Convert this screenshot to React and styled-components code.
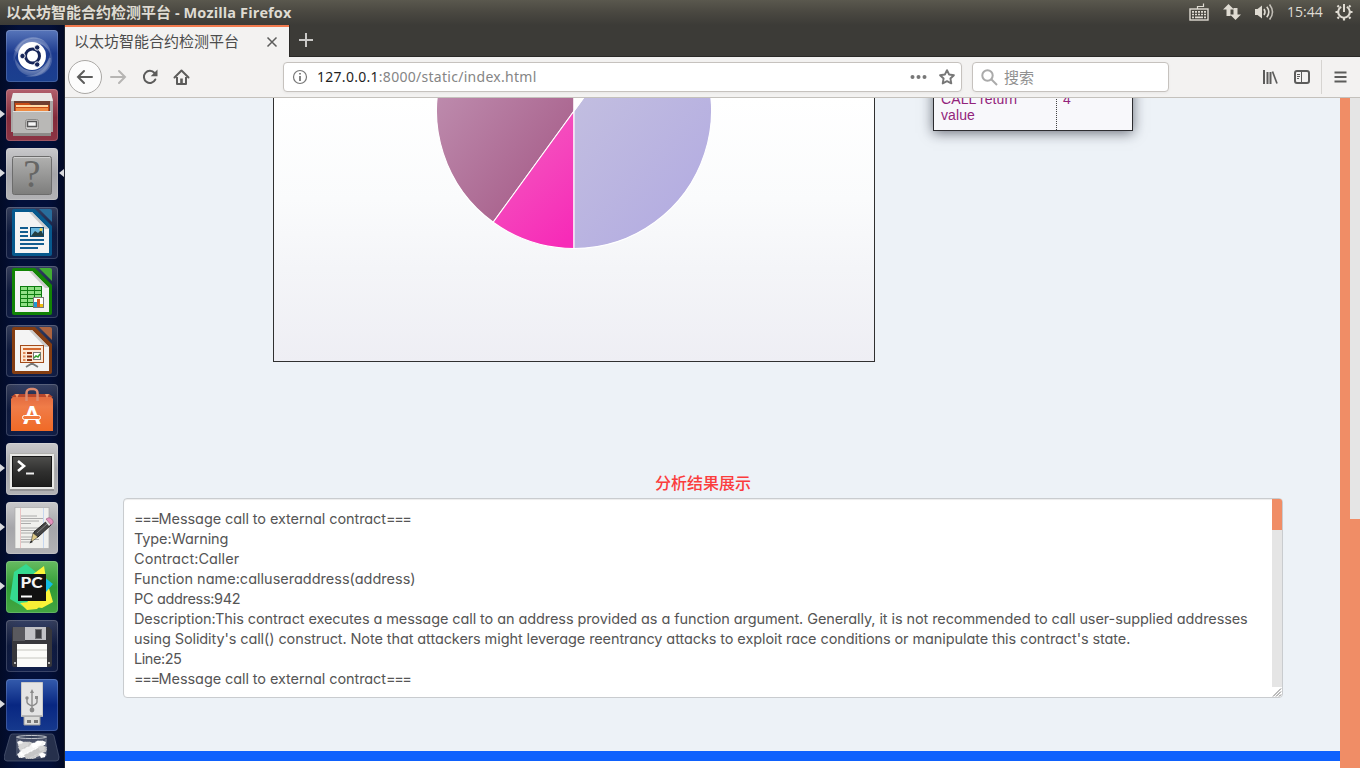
import React from "react";
import styled, { createGlobalStyle } from "styled-components";

const GlobalStyle = createGlobalStyle`
  *, *::before, *::after { box-sizing: border-box; }
  html, body { margin: 0; padding: 0; overflow: hidden; }
  svg { display: block; flex: none; }
`;

const uiFont = `"Open Sans", "Noto Sans", "Noto Sans CJK SC", sans-serif`;

const Desktop = styled.div`
  width: 1360px;
  height: 768px;
  display: flex;
  flex-direction: column;
  overflow: hidden;
  background: #030e30;
  font-family: ${uiFont};
`;

const SystemBar = styled.header`
  height: 25px;
  flex: none;
  display: flex;
  align-items: center;
  justify-content: space-between;
  padding: 0 7px 0 6px;
  background: linear-gradient(#5a584e 0, #4a4841 12px, #3c3b37 25px);
  color: #dfdbd2;
`;

const WindowTitle = styled.div`
  font: 700 15px/24px ${uiFont};
  white-space: pre;
`;

const TitleLatin = styled.span`
  font-size: 14.5px;
  letter-spacing: 0.12px;
`;

const Indicators = styled.div`
  display: flex;
  align-items: center;
  height: 25px;
  padding-bottom: 1px;
`;

const Indicator = styled.div`
  margin-right: ${(p) => p.$gap}px;
`;

const Clock = styled.div`
  font: 400 14px/24px ${uiFont};
  width: 36px;
  margin-right: 12px;
  white-space: nowrap;
`;

const Body = styled.div`
  flex: 1;
  min-height: 0;
  display: flex;
`;

const Launcher = styled.nav`
  width: 65px;
  flex: none;
  padding-top: 5px;
  background: linear-gradient(90deg, #020b27, #03103a 30%, #03103a 75%, #020a26);
  border-right: 1px solid #20242f;
  overflow: hidden;
`;

const LauncherItem = styled.div`
  height: 59px;
  display: flex;
  align-items: flex-start;
`;

const Pip = styled.div`
  width: 6px;
  height: 50px;
  display: flex;
  align-items: center;
  justify-content: ${(p) => (p.$right ? "flex-end" : "flex-start")};
`;

const Tile = styled.div`
  width: 52px;
  height: 52px;
  border-radius: 4px;
  background: ${(p) => p.$bg};
  box-shadow: inset 0 0 0 1px rgba(255, 255, 255, 0.17);
`;

const TrashSlot = styled.div`
  margin-top: -5px;
  padding-left: 4px;
`;

const Browser = styled.main`
  width: 1295px;
  display: flex;
  flex-direction: column;
  background: #f3f2f1;
`;

const TabStrip = styled.div`
  height: 32px;
  flex: none;
  display: flex;
  background: #3c3b37;
  border-bottom: 1px solid #2a2927;
`;

const Tab = styled.div`
  width: 224px;
  height: 32px;
  display: flex;
  align-items: center;
  justify-content: space-between;
  padding: 0 11px 0 9px;
  background: #f3f2f1;
  border-top: 2px solid #f27a4e;
  color: #4c4c4c;
  font-size: 15px;
  line-height: 26px;
`;

const TabLabel = styled.span`
  padding-bottom: 3px;
`;

const NewTab = styled.div`
  padding: 8px 0 0 9px;
  border-left: 1px solid #2a2927;
`;

const Toolbar = styled.div`
  height: 41px;
  flex: none;
  display: flex;
  align-items: center;
  padding-left: 3px;
  background: #f3f2f1;
  border-bottom: 1px solid #c4c1bc;
`;

const BackButton = styled.div`
  width: 34px;
  height: 34px;
  border-radius: 50%;
  border: 1px solid #aaa8a5;
  background: #fcfcfc;
  display: flex;
  align-items: center;
  justify-content: center;
  margin-right: 7px;
`;

const ToolIcon = styled.div`
  margin-right: ${(p) => p.$gap}px;
`;

const Field = styled.div`
  width: ${(p) => p.$width}px;
  height: 30px;
  display: flex;
  align-items: center;
  border: 1px solid #c6c2be;
  border-radius: 4px;
  background: #fff;
  box-shadow: 0 1px 3px rgba(0, 0, 0, 0.05);
  margin-right: ${(p) => p.$after}px;
  padding: 0 6px 0 8px;
  font-size: 15px;
  line-height: 28px;
  color: #909090;
`;

const Address = styled.div`
  flex: 1;
  margin-left: 9px;
  font: 400 14px/28px "Noto Sans", sans-serif;
  letter-spacing: 0.28px;
  color: #858585;
`;

const Host = styled.span`
  color: #1f1f1f;
`;

const Placeholder = styled.span`
  margin-left: 6px;
`;

const Separator = styled.div`
  width: 1px;
  height: 34px;
  background: #d6d4d1;
  margin-right: 12px;
`;

const Viewport = styled.div`
  flex: 1;
  min-height: 0;
  display: flex;
  overflow: hidden;
`;

const Page = styled.div`
  width: 1275px;
  display: flex;
  flex-direction: column;
  background: #edf2f7;
  overflow: hidden;
`;

const Overview = styled.section`
  display: flex;
  align-items: flex-start;
  gap: 58px;
  margin-top: -20px;
  padding-left: 208px;
  height: 394px;
  flex: none;
`;

const ChartPanel = styled.div`
  width: 602px;
  height: 284px;
  border: 1px solid #303030;
  background: linear-gradient(#fff 20px, #fafbfc 120px, #f4f5f8 190px, #eeeef4 283px);
`;

const SummaryTable = styled.div`
  width: 200px;
  height: 53px;
  display: flex;
  border: 1px solid #2c2c30;
  background: #f8f8fb;
  box-shadow: 0 2px 12px rgba(20, 25, 40, 0.6);
  font: 400 14px/16px "Liberation Sans", sans-serif;
  color: #93247b;
`;

const SummaryName = styled.div`
  width: 123px;
  padding: 12px 30px 0 7px;
  border-right: 1px dotted #444;
  letter-spacing: 0.1px;
`;

const SummaryCount = styled.div`
  padding: 12px 0 0 6px;
`;

const ResultTitle = styled.h2`
  margin: 0;
  height: 26px;
  padding-left: 1px;
  font: 500 16px/20px "Noto Sans CJK SC", sans-serif;
  color: #fb3c3c;
  text-align: center;
`;

const ResultBox = styled.div`
  width: 1160px;
  height: 200px;
  flex: none;
  margin-left: 58px;
  display: flex;
  justify-content: space-between;
  border: 1px solid #c9cccf;
  border-radius: 4px;
  background: #fff;
  box-shadow: inset 0 1px 1px rgba(0, 0, 0, 0.075);
`;

const ResultText = styled.div`
  height: 188px;
  padding: 10px 0 0 10px;
  overflow: hidden;
`;

const ResultLine = styled.div`
  height: 20px;
  font: 400 14.5px/20px Inter, sans-serif;
  font-feature-settings: "cv11";
  letter-spacing: ${(p) => p.$track}px;
  color: #555;
  white-space: pre;
`;

const Rule = styled.span`
  letter-spacing: -1.4px;
`;

const ResultScroll = styled.div`
  width: 10px;
  display: flex;
  flex-direction: column;
`;

const ResultTrack = styled.div`
  height: 188px;
  background: #e5e5e5;
`;

const ResultThumb = styled.div`
  height: 31px;
  border-radius: 0 2px 0 0;
  background: #f08d66;
`;

const FooterBand = styled.div`
  height: 17px;
  margin-top: auto;
  border-top: 10px solid #0e61fd;
  background: #fff;
`;

const InnerScrollbar = styled.div`
  width: 10px;
  background: #f08d66;
`;

const OuterScrollbar = styled.div`
  width: 10px;
  background: #f08d66;
`;

const OuterTrack = styled.div`
  height: 421px;
  background: #e5e5e5;
`;

/* ---------- launcher artwork ---------- */

const UbuntuIcon = () => (
  <svg width="52" height="52" viewBox="0 0 52 52">
    <defs>
      <radialGradient id="swirl" cx=".5" cy=".5" r=".6">
        <stop offset="0" stopColor="#fff" stopOpacity=".65" />
        <stop offset="1" stopColor="#fff" stopOpacity=".05" />
      </radialGradient>
    </defs>
    <path d="M7 32C7 15 19 6 31 8c10 1 15 12 14 20-1-9-8-15-16-15-11 0-17 7-22 19Z" fill="url(#swirl)" />
    <path d="M45 20c5 15-5 27-18 26C15 46 9 38 8 26c4 10 10 15 18 15 9 0 17-7 19-21Z" fill="url(#swirl)" />
    <path d="M8 20C14 8 28 2 40 12c-12-6-24-4-29 10ZM45 28c-1 12-12 22-26 18 12 0 21-6 24-18Z" fill="#fff" opacity=".18" />
    <circle cx="26" cy="26" r="14" fill="#fff" />
    <circle cx="26.500" cy="26" r="7" fill="none" stroke="#162558" strokeWidth="3" />
    <g fill="#162558" stroke="#fff" strokeWidth=".9">
      <circle cx="16.500" cy="26" r="2.700" />
      <circle cx="31.200" cy="17.500" r="2.700" />
      <circle cx="31.200" cy="34.500" r="2.700" />
    </g>
  </svg>
);

const FilesIcon = () => (
  <svg width="52" height="52" viewBox="0 0 52 52">
    <path d="M7 4h38l2 8v31H5V12Z" fill="#aaa7a6" />
    <path d="M7 4h38l2 8H5Z" fill="#e9e8e6" />
    <path d="M8 12h36v11H8Z" fill="#6e3d30" />
    <path d="M9 14h14l2 2h18v7H9Z" fill="#c74b16" />
    <path d="M10 16h32v2H10Z" fill="#ffd9a6" />
    <path d="M10 19h32v4H10Z" fill="#ee8b42" />
    <path d="M7 22h38v25H7Z" fill="#b9b8b6" />
    <path d="M7 22h38v1H7Z" fill="#e2e1df" />
    <path d="M7 44h38v3H7Z" fill="#8d8a88" />
    <rect x="19.500" y="30.500" width="13" height="10" rx="2" fill="#d6d5d3" stroke="#8b8987" />
    <rect x="21.500" y="32.500" width="9" height="5" fill="#f5f5f5" stroke="#555" strokeWidth="1.500" />
  </svg>
);

const UnknownIcon = () => (
  <svg width="52" height="52" viewBox="0 0 52 52">
    <defs>
      <linearGradient id="unk" x2="0" y2="1"><stop stopColor="#b1b1b0" /><stop offset="1" stopColor="#7d7d7c" /></linearGradient>
    </defs>
    <rect x="6.500" y="8.500" width="39" height="38" rx="2" fill="url(#unk)" stroke="#6c6c6c" />
    <path d="M8 9.500h36" stroke="#cfcfcf" />
    <text x="26" y="38.500" textAnchor="middle" fontFamily="Liberation Serif, serif" fontSize="39" fill="#666665">?</text>
  </svg>
);

function DocumentIcon({ color, corner, children }) {
  return (
    <svg width="52" height="52" viewBox="0 0 52 52">
      <path d="M8 2h21l17 17v28a2 2 0 0 1-2 2H8a2 2 0 0 1-2-2V4a2 2 0 0 1 2-2Z" fill={color} />
      <path d="M9 5h17l17 17v24H9Z" fill="#f4f4f4" />
      <path d="M26 5 43 22h-4L23 5Z" fill="#cbcbcb" />
      <path d="M33 2h11a2 2 0 0 1 2 2v11Z" fill={corner} />
      {children}
    </svg>
  );
}

const WriterIcon = () => (
  <DocumentIcon color="#07598d" corner="#286d9c">
    <path d="M14 21h8M14 25h8M14 29h8M14 33h24M14 37h24M14 41h18" stroke="#125d90" strokeWidth="2" />
    <rect x="24.500" y="20.500" width="13" height="9" fill="#6bb8df" stroke="#0b4770" />
    <path d="m25 29 4-5 3 2 3-3 3 6Z" fill="#243f43" />
    <circle cx="35" cy="22.500" r="1.500" fill="#efcf4b" />
  </DocumentIcon>
);

const CalcIcon = () => (
  <DocumentIcon color="#128405" corner="#42ac34">
    <rect x="14" y="20" width="22" height="21" fill="#0d7c10" />
    {[21, 25, 29, 33, 37].map((y) =>
      [15, 22, 29].map((x) => <rect key={`${x}-${y}`} x={x} y={y} width="6" height="3" fill="#90df85" />)
    )}
    <rect x="27.500" y="31.500" width="10" height="10" fill="#fff" stroke="#777" />
    <path d="M28 36h3v5h-3Z" fill="#2098d5" /><path d="M31 33h3v8h-3Z" fill="#d65a21" /><path d="M34 38h3v3h-3Z" fill="#edbd10" />
  </DocumentIcon>
);

const ImpressIcon = () => (
  <DocumentIcon color="#843d12" corner="#ac6440">
    <rect x="14.500" y="20.500" width="23" height="17" fill="#fce8d5" stroke="#a34b1b" />
    <path d="M17 24h18" stroke="#d4682e" strokeWidth="2" />
    <path d="M17 27h2.500v2H17zM17 30.500h2.500v2H17zM17 34h2.500v2H17z" fill="#e08a58" />
    <path d="M21 27h5v2h-5zM21 30.500h5v2h-5zM21 34h5v2h-5z" fill="#8c3211" />
    <rect x="27.500" y="27.500" width="7" height="7" fill="#fff" stroke="#777" />
    <path d="m28 33 2-2 2 1 2-3" fill="none" stroke="#32a02e" strokeWidth="1.500" />
    <path d="M26 38v2m-6 2 5-3h2l5 3" fill="none" stroke="#777" strokeWidth="1.800" />
  </DocumentIcon>
);

const SoftwareIcon = () => (
  <svg width="52" height="52" viewBox="0 0 52 52">
    <defs><linearGradient id="bag" x2="0" y2="1"><stop stopColor="#df673d" /><stop offset=".35" stopColor="#f07c48" /><stop offset="1" stopColor="#f06a26" /></linearGradient></defs>
    <path d="m5 15 4-5h34l4 5v32H5Z" fill="url(#bag)" />
    <path d="m5 13 4-3h34l4 3Z" fill="#b7472c" />
    <path d="m9 10 2 4 2-4m26 0 2 4 2-4" fill="#ef9868" />
    <path d="M20.500 17V9a4 4 0 0 1 4-4h3a4 4 0 0 1 4 4v8" fill="none" stroke="#dc8b70" strokeWidth="2.500" />
    <text x="26" y="39.500" textAnchor="middle" fontFamily="Lato, sans-serif" fontWeight="900" fontSize="24" fill="#fff">A</text>
    <rect x="16.500" y="31.500" width="18" height="4" rx="2" fill="#f37a3e" stroke="#fff" />
  </svg>
);

const TerminalIcon = () => (
  <svg width="52" height="52" viewBox="0 0 52 52">
    <defs><linearGradient id="screen" x2="0" y2="1"><stop stopColor="#4e4e4c" /><stop offset=".5" stopColor="#30302f" /><stop offset="1" stopColor="#1d1d1c" /></linearGradient></defs>
    <rect x="3.500" y="10.500" width="45" height="36" rx="1" fill="#e8e8e6" stroke="#b1b1ae" />
    <path d="M4 47h44" stroke="#77777b" />
    <rect x="6.500" y="13.500" width="39" height="30" fill="url(#screen)" stroke="#171717" />
    <path d="m12 18 6 5-6 5" fill="none" stroke="#fff" strokeWidth="2.600" />
    <path d="M20 30.500h8" stroke="#eee" strokeWidth="2" />
  </svg>
);

const EditorIcon = () => (
  <svg width="52" height="52" viewBox="0 0 52 52">
    <rect x="9" y="5.500" width="34" height="41" fill="#f0f0ed" stroke="#aaa" strokeWidth=".7" />
    <path d="M14.500 6v40" stroke="#e9c4c4" /><path d="M37.500 6v40" stroke="#c6d7ef" />
    <path d="M15 14h16M15 16.500h22M15 19h18M15 21.500h10M15 26h19M15 28.500h22M15 31h17M15 35h15M15 37.500h18M15 40h10" stroke="#9a9a9a" strokeWidth=".8" />
    <path d="m27 36 1-6 14-12 4 4-14 13Z" fill="#454545" stroke="#222" />
    <path d="m27 31 5 4-7 5Z" fill="#dfca87" stroke="#222" strokeWidth=".5" />
    <path d="m23.500 41.500 1.500-3 2 1.500Z" fill="#222" />
    <path d="m31 31 11-10" stroke="#858585" />
    <path d="m39 19 2-2 4 5-2 2Z" fill="#e8e8e8" />
    <path d="m40 17 2-1c2-1 6 2 5 5l-2 2Z" fill="#e392bd" stroke="#96597b" strokeWidth=".6" />
  </svg>
);

const PycharmIcon = () => (
  <svg width="52" height="52" viewBox="0 0 52 52">
    <path d="m4 38 4-27L20 3l10 8v31l-9 6Z" fill="#35d990" />
    <path d="m26 14 12-9 2 12 7 24-11 6-15-2Z" fill="#faf43a" />
    <path d="m38 16 9 7-7 8Z" fill="#12bde4" />
    <path d="m14 42 26-3-9 9-10 1Z" fill="#f8ef35" />
    <rect x="12" y="13" width="28" height="27" fill="#111" />
    <text x="14.500" y="27" fontFamily="Lato, sans-serif" fontWeight="900" fontSize="15" textLength="22" lengthAdjust="spacingAndGlyphs" fill="#f4f4f4">PC</text>
    <path d="M15 35.500h11" stroke="#fff" strokeWidth="2" />
  </svg>
);

const FloppyIcon = () => (
  <svg width="52" height="52" viewBox="0 0 52 52">
    <path d="M7 7h36l3 3v35a2 2 0 0 1-2 2H7l-1-2V8Z" fill="#37373c" />
    <path d="M7 7h12v14H7Z" fill="#59595e" />
    <path d="M19 7h21v13H19Z" fill="#c2c2c5" />
    <rect x="29.500" y="9.500" width="6" height="9" fill="#3e3e42" stroke="#707074" />
    <path d="M11 24h30v23H11Z" fill="#fbfbf9" />
    <path d="M11 30h30M11 38h30" stroke="#c6c6c0" />
    <path d="M8 42h2v2H8zM42 42h2v2h-2z" fill="#bbb" />
  </svg>
);

const UsbIcon = () => (
  <svg width="52" height="52" viewBox="0 0 52 52">
    <path d="M18 37h16v9H18Z" fill="#dcdcda" stroke="#999" />
    <path d="M21 41h4v3h-4zM28 41h4v3h-4z" fill="#777" />
    <path d="M15.500 3.500h21v34h-21Z" fill="#e4e4e4" stroke="#c8c8c8" />
    <path d="M16 37h20" stroke="#909090" />
    <path d="M26 31V12m-5 7v4q0 2 5 4m5-7v3q0 2-5 4" fill="none" stroke="#8a8a8a" strokeWidth="1.400" />
    <path d="m26 10 2 4h-4Zm3 7h3v3h-3Z" fill="#8a8a8a" />
    <circle cx="21" cy="19" r="1.700" fill="#8a8a8a" /><circle cx="26" cy="31" r="2.400" fill="#8a8a8a" />
  </svg>
);

const snow = Array.from({ length: 48 }, (_, i) => ({
  x: 17 + ((i * 17) % 24),
  y: 9 + ((i * 11) % 14),
  shade: ["#f4f4f4", "#d5d5d5", "#fff", "#c6c6c6"][i % 4],
}));

const TrashIcon = () => (
  <svg width="56" height="30" viewBox="0 0 56 30">
    <path d="M8.500 1h39q2 0 2.500 2l5 21q.5 4-3 4H3q-3 0-3-4L6 3q.5-2 2.500-2Z" fill="#26304c" stroke="#4b5570" strokeWidth=".8" />
    <path d="M12 4h31l-2 21q-13 2-26 0Z" fill="#6b7184" opacity=".5" />
    <ellipse cx="27.500" cy="4" rx="15" ry="1.500" fill="#303b55" stroke="#c5c8ce" />
    {snow.map((s, i) => (
      <path key={i} d={`m${s.x - 4} ${s.y} 3-1.500 4 1.500-1 3-4 1Z`} fill={s.shade} />
    ))}
    <path d="M13 6v17M42 6v17" stroke="#aab0bc" opacity=".5" />
  </svg>
);

const darkTile = "linear-gradient(rgba(255,255,255,.2), rgba(90,105,145,.14) 50%, rgba(50,65,110,.3))";
const greyTile = "linear-gradient(#c9c9cb, #a5a5a9 50%, #b2b2b5)";

const apps = [
  { id: "dash", Icon: UbuntuIcon, bg: "linear-gradient(#5876ba, #1c3a8e 45%, #1b408f)" },
  { id: "files", Icon: FilesIcon, bg: "linear-gradient(#b2606c, #832c3b 55%, #8c3444)", running: true },
  { id: "unknown", Icon: UnknownIcon, bg: greyTile, running: true, focused: true },
  { id: "writer", Icon: WriterIcon, bg: darkTile },
  { id: "calc", Icon: CalcIcon, bg: darkTile },
  { id: "impress", Icon: ImpressIcon, bg: darkTile },
  { id: "software", Icon: SoftwareIcon, bg: darkTile },
  { id: "terminal", Icon: TerminalIcon, bg: greyTile, running: true },
  { id: "editor", Icon: EditorIcon, bg: greyTile, running: true },
  { id: "pycharm", Icon: PycharmIcon, bg: "linear-gradient(#67bb61, #2f9b35 50%, #43a642)", running: true },
  { id: "floppy", Icon: FloppyIcon, bg: darkTile },
  { id: "usb", Icon: UsbIcon, bg: "linear-gradient(#345bac, #082782 50%, #16398d)", running: true },
];

const Arrow = ({ left }) => (
  <svg width="5" height="8" viewBox="0 0 5 8">
    <path d={left ? "M5 0v8L0 4Z" : "M0 0v8l5-4Z"} fill="#d9dade" />
  </svg>
);

/* ---------- indicator and toolbar glyphs ---------- */

const KeyboardGlyph = () => (
  <svg width="20" height="20" viewBox="0 0 20 20" fill="none" stroke="#dfdbd2">
    <path d="M8.500 7V4.500h6v-3" strokeWidth="1.200" />
    <rect x="1" y="7" width="18" height="11" strokeWidth="1.400" />
    <path d="M3 9.800h2m1 0h2m1 0h2m1 0h2m1 0h2M3 12.500h2m1 0h2m1 0h2m1 0h2m1 0h2M3 15.300h2m1 0h8m1 0h2" strokeWidth="1.700" />
  </svg>
);

const NetworkGlyph = () => (
  <svg width="18" height="18" viewBox="0 0 18 18" fill="#dfdbd2">
    <path d="M5.500 1 11 6.500H7.500V13h-4V6.500H0ZM12.500 17 7 11.500h3.500V5h4v6.500H18Z" />
  </svg>
);

const VolumeGlyph = () => (
  <svg width="21" height="18" viewBox="0 0 21 18" fill="none" stroke="#dfdbd2" strokeWidth="1.600">
    <path d="M1 6h2.500L8 2.500v13L3.500 12H1Z" fill="#dfdbd2" stroke="none" />
    <path d="M10 6q2 3 0 6" /><path d="M12.800 3.800q4 5.200 0 10.400" /><path d="M15.500 1.500q6 7.500 0 15" opacity=".8" />
  </svg>
);

const PowerGlyph = () => (
  <svg width="18" height="18" viewBox="0 0 18 18" fill="none" stroke="#dfdbd2">
    <path d="M6.200 3.900a5.800 5.800 0 1 0 5.600 0" strokeWidth="2" />
    <path d="M9 1v8" strokeWidth="2" />
    <path d="m4 4-1.500-1.500M14 4l1.500-1.500M3 9H.5M15 9h2.500M4 14l-1.500 1.500M14 14l1.500 1.500M9 15v2.500" strokeWidth="2.200" />
  </svg>
);

const stroke = { fill: "none", stroke: "#5c5c5b", strokeWidth: 2 };

const BackGlyph = () => (
  <svg width="18" height="16" viewBox="0 0 18 16" {...stroke} strokeLinecap="round"><path d="M8 2 2 8l6 6M2 8h14" /></svg>
);
const ForwardGlyph = () => (
  <svg width="18" height="16" viewBox="0 0 18 16" {...stroke} stroke="#b6b5b3" strokeLinecap="round"><path d="m10 2 6 6-6 6m6-6H2" /></svg>
);
const ReloadGlyph = () => (
  <svg width="16" height="16" viewBox="0 0 16 16" {...stroke}>
    <path d="M13.300 10.500A6 6 0 1 1 12.500 4" strokeLinecap="round" /><path d="M15.500.5v6.800H8.700Z" fill="#5c5c5b" stroke="none" />
  </svg>
);
const HomeGlyph = () => (
  <svg width="17" height="17" viewBox="0 0 17 17" {...stroke}>
    <path d="m1.500 8.500 7-7 7 7" strokeLinecap="round" strokeLinejoin="round" /><path d="M4 8v7h9V8" strokeLinejoin="round" /><path d="M7.200 9.500h2.600V15H7.200Z" fill="#5c5c5b" stroke="none" />
  </svg>
);
const InfoGlyph = () => (
  <svg width="16" height="16" viewBox="0 0 16 16" {...stroke} stroke="#777" strokeWidth="1.200">
    <circle cx="8" cy="8" r="6.500" /><path d="M8 7v5M8 4v1.500" strokeWidth="1.800" />
  </svg>
);
const MoreGlyph = () => (
  <svg width="17" height="16" viewBox="0 0 17 16" fill="#777"><circle cx="2.500" cy="8" r="2" /><circle cx="8.500" cy="8" r="2" /><circle cx="14.500" cy="8" r="2" /></svg>
);
const StarGlyph = () => (
  <svg width="16" height="16" viewBox="0 0 16 16" {...stroke} stroke="#777" strokeWidth="1.900" strokeLinejoin="round">
    <path d="m8 1.200 2.100 4.300 4.800.7-3.500 3.300.9 4.900L8 12.100l-4.300 2.300.9-4.900L1.100 6.200l4.800-.7Z" />
  </svg>
);
const SearchGlyph = () => (
  <svg width="17" height="17" viewBox="0 0 17 17" {...stroke} stroke="#aaa"><circle cx="6.500" cy="6.500" r="5.200" /><path d="m10.500 10.500 5.500 5.500" /></svg>
);
const LibraryGlyph = () => (
  <svg width="16" height="16" viewBox="0 0 16 16" {...stroke}><path d="M2 1v14M5.500 3v12M8.500 3v12" /><path d="m10.500 2.500 4.500 12" strokeWidth="1.700" /></svg>
);
const SidebarGlyph = () => (
  <svg width="16" height="14" viewBox="0 0 16 14" {...stroke}>
    <rect x="1" y="1" width="14" height="12" rx="2" /><path d="M7.500 1v12M3 4.500h3M3 6.500h3M3 8.500h2" strokeWidth="1" />
  </svg>
);
const MenuGlyph = () => (
  <svg width="13" height="14" viewBox="0 0 13 14" {...stroke}><path d="M.5 2.500h12M.5 7h12M.5 11.500h12" /></svg>
);
const CloseGlyph = () => (
  <svg width="12" height="12" viewBox="0 0 12 12" {...stroke} strokeWidth="1.500"><path d="m1.500 1.500 9 9m0-9-9 9" /></svg>
);
const PlusGlyph = () => (
  <svg width="14" height="14" viewBox="0 0 14 14" {...stroke} stroke="#cac9c7"><path d="M7 0v14M0 7h14" /></svg>
);
const GripGlyph = () => (
  <svg width="10" height="10" viewBox="0 0 10 10" stroke="#777" strokeWidth="1"><path d="m1 9.500 8-8M4 9.500l5-5M7 9.500l2-2" /></svg>
);

/* ---------- page content ---------- */

const PieChart = () => (
  <svg width="600" height="282" viewBox="274 79 600 282">
    <defs>
      <linearGradient id="mauve" gradientUnits="userSpaceOnUse" x1="435" y1="75" x2="555" y2="170"><stop stopColor="#bf8fb0" /><stop offset="1" stopColor="#a9628d" /></linearGradient>
      <linearGradient id="pink" gradientUnits="userSpaceOnUse" x1="525" y1="145" x2="590" y2="220"><stop stopColor="#f450be" /><stop offset="1" stopColor="#f72bb8" /></linearGradient>
      <linearGradient id="lilac" gradientUnits="userSpaceOnUse" x1="580" y1="90" x2="695" y2="190"><stop stopColor="#c2bee0" /><stop offset="1" stopColor="#b5aee1" /></linearGradient>
    </defs>
    <g stroke="#fff" strokeWidth="1.100">
      <path d="M574 111V-26.500A137.500 137.500 0 0 0 493.200 222.200Z" fill="url(#mauve)" />
      <path d="M574 111 493.200 222.200A137.500 137.500 0 0 0 574 248.500Z" fill="url(#pink)" />
      <path d="M574 111V248.500A137.500 137.500 0 0 0 654.800-.2Z" fill="url(#lilac)" />
      <path d="M574 111V-26.500A137.500 137.500 0 0 1 654.800-.2Z" fill="#fff" />
    </g>
  </svg>
);

const resultLines = [
  { text: "Message call to external contract", track: -0.09, ruled: true },
  { text: "Type:Warning", track: -0.12 },
  { text: "Contract:Caller", track: 0.06 },
  { text: "Function name:calluseraddress(address)", track: 0 },
  { text: "PC address:942", track: -0.33 },
  { text: "Description:This contract executes a message call to an address provided as a function argument. Generally, it is not recommended to call user-supplied addresses", track: -0.09 },
  { text: "using Solidity's call() construct. Note that attackers might leverage reentrancy attacks to exploit race conditions or manipulate this contract's state.", track: -0.1 },
  { text: "Line:25", track: -0.45 },
  { text: "Message call to external contract", track: -0.09, ruled: true },
];

export default function App() {
  return (
    <Desktop>
      <GlobalStyle />
      <SystemBar>
        <WindowTitle>以太坊智能合约检测平台<TitleLatin> - Mozilla Firefox</TitleLatin></WindowTitle>
        <Indicators>
          <Indicator $gap={14}><KeyboardGlyph /></Indicator>
          <Indicator $gap={13}><NetworkGlyph /></Indicator>
          <Indicator $gap={12}><VolumeGlyph /></Indicator>
          <Clock>15:44</Clock>
          <PowerGlyph />
        </Indicators>
      </SystemBar>
      <Body>
        <Launcher>
          {apps.map(({ id, Icon, bg, running, focused }) => (
            <LauncherItem key={id}>
              <Pip>{running && <Arrow />}</Pip>
              <Tile $bg={bg}><Icon /></Tile>
              <Pip $right>{focused && <Arrow left />}</Pip>
            </LauncherItem>
          ))}
          <TrashSlot><TrashIcon /></TrashSlot>
        </Launcher>
        <Browser>
          <TabStrip>
            <Tab><TabLabel>以太坊智能合约检测平台</TabLabel><CloseGlyph /></Tab>
            <NewTab><PlusGlyph /></NewTab>
          </TabStrip>
          <Toolbar>
            <BackButton><BackGlyph /></BackButton>
            <ToolIcon $gap={15}><ForwardGlyph /></ToolIcon>
            <ToolIcon $gap={15}><ReloadGlyph /></ToolIcon>
            <ToolIcon $gap={93}><HomeGlyph /></ToolIcon>
            <Field $width={679} $after={10}>
              <InfoGlyph />
              <Address><Host>127.0.0.1</Host>:8000/static/index.html</Address>
              <ToolIcon $gap={12}><MoreGlyph /></ToolIcon>
              <StarGlyph />
            </Field>
            <Field $width={197} $after={93}>
              <SearchGlyph />
              <Placeholder>搜索</Placeholder>
            </Field>
            <ToolIcon $gap={16}><LibraryGlyph /></ToolIcon>
            <ToolIcon $gap={11}><SidebarGlyph /></ToolIcon>
            <Separator />
            <MenuGlyph />
          </Toolbar>
          <Viewport>
            <Page>
              <Overview>
                <ChartPanel><PieChart /></ChartPanel>
                <SummaryTable>
                  <SummaryName>CALL return value</SummaryName>
                  <SummaryCount>4</SummaryCount>
                </SummaryTable>
              </Overview>
              <ResultTitle>分析结果展示</ResultTitle>
              <ResultBox>
                <ResultText>
                  {resultLines.map(({ text, track, ruled }, i) => (
                    <ResultLine key={i} $track={track}>
                      {ruled && <Rule>===</Rule>}
                      {text}
                      {ruled && <Rule>===</Rule>}
                    </ResultLine>
                  ))}
                </ResultText>
                <ResultScroll>
                  <ResultTrack><ResultThumb /></ResultTrack>
                  <GripGlyph />
                </ResultScroll>
              </ResultBox>
              <FooterBand />
            </Page>
            <InnerScrollbar />
            <OuterScrollbar><OuterTrack /></OuterScrollbar>
          </Viewport>
        </Browser>
      </Body>
    </Desktop>
  );
}
